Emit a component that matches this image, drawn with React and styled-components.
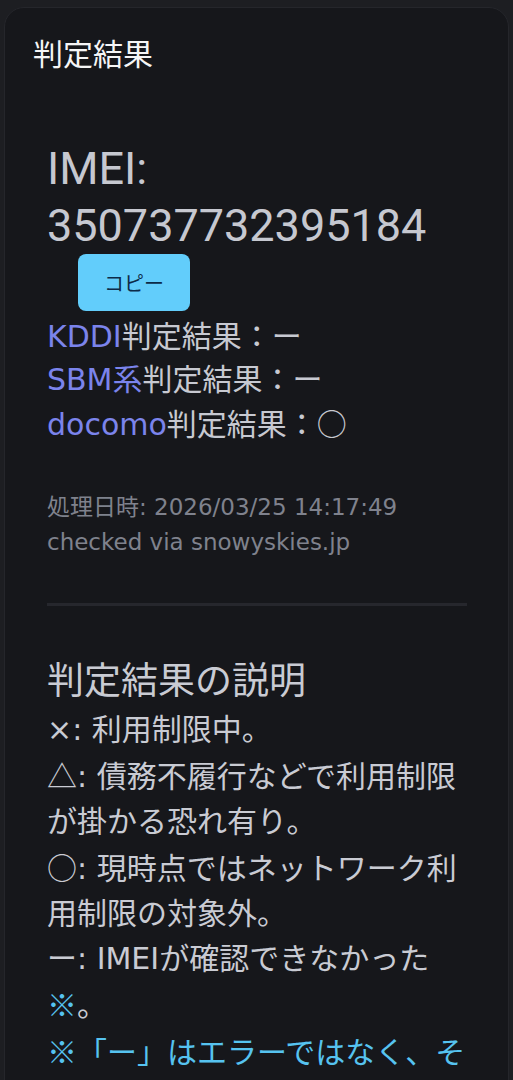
import React from "react";
import styled, { createGlobalStyle } from "styled-components";

const Global = createGlobalStyle`
  html, body { margin: 0; padding: 0; background: #1d1e22; }
  body {
    font-family: Roboto, "Noto Sans CJK JP", sans-serif;
    -webkit-font-smoothing: antialiased;
  }
`;

const WIDE = `"DejaVu Sans", "Noto Sans CJK JP", sans-serif`;
const CJK = `"Noto Sans CJK JP", sans-serif`;

const Page = styled.div`
  padding: 7px 4px 0;
  height: 1080px;
  box-sizing: border-box;
  overflow: hidden;
`;

const Card = styled.section`
  background: #16171b;
  border: 1px solid #25262b;
  border-radius: 20px;
  padding: 22px 0 40px;
  min-height: 1200px;
  box-sizing: border-box;
`;

const Title = styled.h2`
  margin: 0;
  padding: 0 28px;
  font-family: ${CJK};
  font-size: 30px;
  line-height: 44px;
  font-weight: 400;
  color: #f5f5f6;
`;

const Body = styled.div`
  padding: 66px 41px 0 42px;
  color: #c8cad2;
`;

const Imei = styled.div`
  font-size: 45px;
  line-height: 57px;
  color: #c6c8d0;
`;

const CopyButton = styled.button`
  display: block;
  margin: 0 0 4px 31px;
  width: 112px;
  height: 57px;
  border: none;
  border-radius: 8px;
  background: #62cdfb;
  color: #0c2b48;
  font-family: ${CJK};
  font-size: 20px;
  cursor: pointer;
`;

const ResultLine = styled.div`
  font-family: ${WIDE};
  font-size: 30px;
  line-height: 43px;
  color: #c7c9d1;
  white-space: nowrap;
`;

const Carrier = styled.span`
  color: #7b84ec;
`;

const Sym = styled.span`
  font-family: ${CJK};
`;

const Meta = styled.div`
  margin-top: 44px;
  font-family: ${WIDE};
  font-size: 23px;
  line-height: 35px;
  color: #7f828d;
`;

const Divider = styled.hr`
  margin: 43px 0 0;
  border: none;
  height: 3px;
  background: #26272d;
`;

const Heading = styled.h3`
  margin: 47px 0 0;
  font-family: ${CJK};
  font-size: 37px;
  line-height: 50px;
  font-weight: 400;
  color: #c9cbd3;
`;

const Explain = styled.p`
  margin: 4px 0 0;
  font-family: ${WIDE};
  font-size: 30px;
  line-height: 45px;
  color: #c9cbd3;
  white-space: nowrap;
`;

const Note = styled.span`
  font-family: ${CJK};
  color: #56c3f0;
`;

export default function App() {
  return (
    <>
      <Global />
      <Page>
        <Card>
          <Title>判定結果</Title>
          <Body>
            <Imei>
              IMEI:
              <br />
              350737732395184
            </Imei>
            <CopyButton>コピー</CopyButton>
            <ResultLine>
              <Carrier>KDDI</Carrier>判定結果：ー
            </ResultLine>
            <ResultLine>
              <Carrier>SBM系</Carrier>判定結果：ー
            </ResultLine>
            <ResultLine>
              <Carrier>docomo</Carrier>判定結果：<Sym>○</Sym>
            </ResultLine>
            <Meta>
              処理日時: 2026/03/25 14:17:49
              <br />
              checked via snowyskies.jp
            </Meta>
            <Divider />
            <Heading>判定結果の説明</Heading>
            <Explain>
              ×: 利用制限中。
              <br />
              <Sym>△</Sym>: 債務不履行などで利用制限
              <br />
              が掛かる恐れ有り。
              <br />
              <Sym>○</Sym>: 現時点ではネットワーク利
              <br />
              用制限の対象外。
              <br />
              ー: IMEIが確認できなかった
              <br />
              <Note>※</Note>。
              <br />
              <Note>
                ※「ー」はエラーではなく、そ
                <br />
                の時点で各キャリアのデータベース
              </Note>
            </Explain>
          </Body>
        </Card>
      </Page>
    </>
  );
}
